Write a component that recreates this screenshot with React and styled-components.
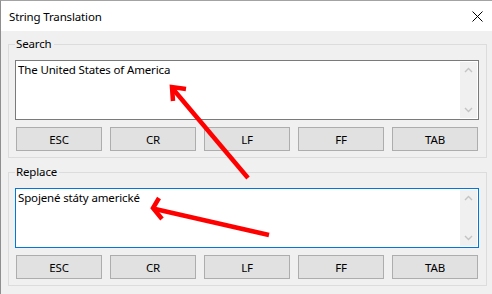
import React from 'react';
import styled, { createGlobalStyle } from 'styled-components';

const GlobalStyle = createGlobalStyle`
  html, body {
    margin: 0;
    padding: 0;
    background: #f0f0f0;
  }
  body {
    font-family: "Noto Sans", "Open Sans", sans-serif;
    font-size: 11.5px;
    letter-spacing: -0.15px;
    color: #000;
  }
`;

// the dialog window
const Window = styled.div`
  position: relative;
  width: 492px;
  height: 294px;
  box-sizing: border-box;
  border-top: 1px solid #a3a3a3;
  border-left: 1px solid #8f8f8f;
  background: #f0f0f0;
  display: flex;
  flex-direction: column;
  overflow: hidden;
`;

const TitleBar = styled.div`
  height: 30px;
  flex: none;
  background: #fff;
  display: flex;
  align-items: center;
  justify-content: space-between;
  padding: 0 9px 0 8px;
`;

const Title = styled.span`
  font-size: 11.5px;
  line-height: 16px;
  padding-top: 1px;
`;

const Body = styled.div`
  display: flex;
  flex-direction: column;
  gap: 6px;
  padding: 5px 0 0 7px;
`;

const Group = styled.fieldset`
  margin: 0;
  width: 479px;
  box-sizing: border-box;
  min-width: 0;
  border: 1px solid #dcdcdc;
  padding: 8px 7px 6px 6px;
  display: flex;
  flex-direction: column;
  gap: 7px;
`;

const Legend = styled.legend`
  padding: 0 2px 0 1px;
  font-size: 11.5px;
  line-height: 16px;
`;

const TextBox = styled.div`
  height: 60px;
  box-sizing: border-box;
  background: #fff;
  border: 1px solid ${p => (p.$focused ? '#0078d7' : '#7a7a7a')};
  display: flex;
`;

const TextValue = styled.div`
  flex: 1;
  padding: 1px 2px 0;
  line-height: 16px;
  white-space: pre;
`;

const ScrollBar = styled.div`
  width: 17px;
  margin: 1px 1px 1px 0;
  background: #f0f0f0;
  display: flex;
  flex-direction: column;
  justify-content: space-between;
  align-items: center;
  padding: 5px 0;
  box-sizing: border-box;
`;

const ButtonRow = styled.div`
  display: grid;
  grid-template-columns: repeat(5, 1fr);
  gap: 8px;
  padding: 0 1px;
`;

const KeyButton = styled.button`
  height: 24px;
  margin: 0;
  padding: 0;
  background: #e1e1e1;
  border: 1px solid #adadad;
  border-radius: 0;
  font-family: inherit;
  font-size: 11.5px;
  letter-spacing: inherit;
  color: #000;
`;

const Overlay = styled.svg`
  position: absolute;
  left: 0;
  top: 0;
  pointer-events: none;
`;

const Chevron = ({ up }) => (
  <svg width="9" height="6" viewBox="0 0 9 6">
    <polyline
      points={up ? '1,5 4.5,1.5 8,5' : '1,1 4.5,4.5 8,1'}
      fill="none"
      stroke="#c4c4c4"
      strokeWidth="1.4"
    />
  </svg>
);

const keys = ['ESC', 'CR', 'LF', 'FF', 'TAB'];

const StringGroup = ({ label, value, focused }) => (
  <Group>
    <Legend>{label}</Legend>
    <TextBox $focused={focused}>
      <TextValue>{value}</TextValue>
      <ScrollBar>
        <Chevron up />
        <Chevron />
      </ScrollBar>
    </TextBox>
    <ButtonRow>
      {keys.map(k => (
        <KeyButton key={k}>{k}</KeyButton>
      ))}
    </ButtonRow>
  </Group>
);

export default function App() {
  return (
    <>
      <GlobalStyle />
      <Window>
        <TitleBar>
          <Title>String Translation</Title>
          <svg width="11" height="11" viewBox="0 0 11 11">
            <path d="M0.5 0.5 L10.5 10.5 M10.5 0.5 L0.5 10.5" stroke="#000" strokeWidth="1" />
          </svg>
        </TitleBar>
        <Body>
          <StringGroup label="Search" value="The United States of America" />
          <StringGroup label="Replace" value="Spojené státy americké" focused />
        </Body>
        <Overlay width="492" height="294" viewBox="0 0 492 294">
          <g stroke="#ff0000" strokeWidth="4.5" fill="none" strokeLinejoin="miter">
            <line x1="247" y1="177" x2="172" y2="88" />
            <polyline points="185,88 171,86 172,100" />
            <line x1="268" y1="234" x2="154" y2="208" />
            <polyline points="158,197 152,207 161,218" />
          </g>
        </Overlay>
      </Window>
    </>
  );
}
